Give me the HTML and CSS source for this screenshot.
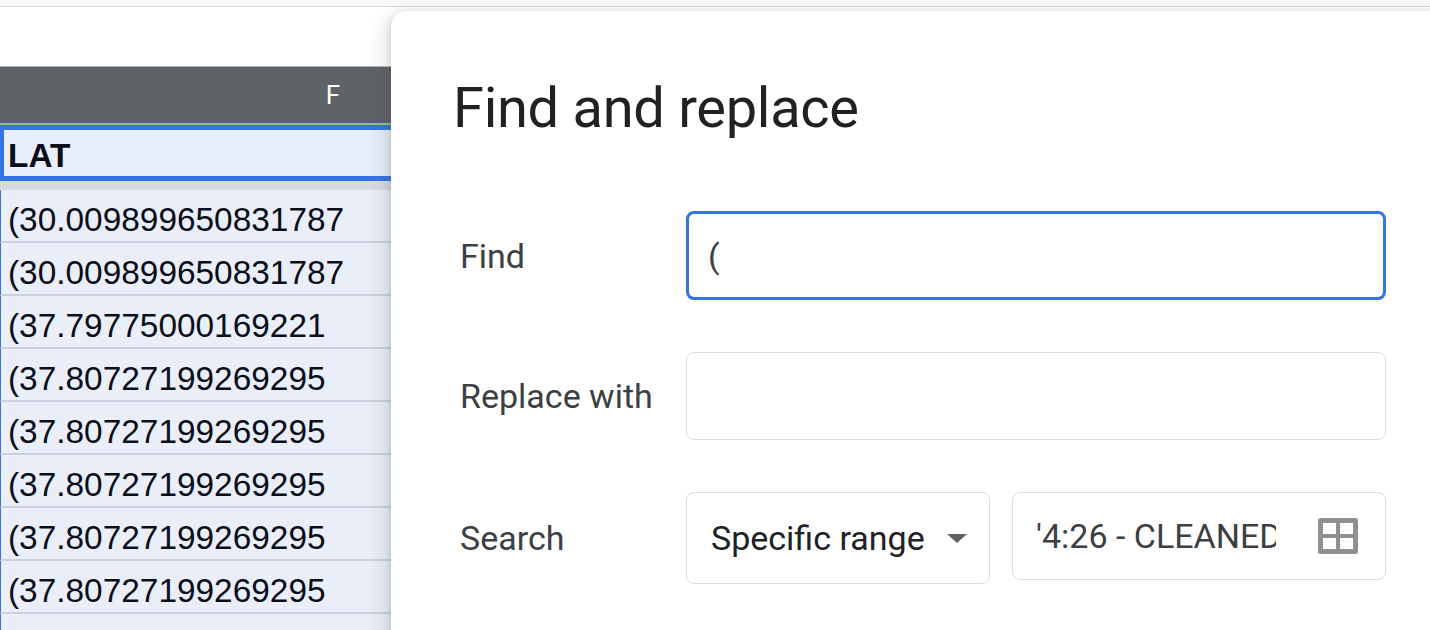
FILE: index.html
```html
<!DOCTYPE html>
<html lang="en">
<head>
<meta charset="utf-8">
<title>Find and replace</title>
<link rel="stylesheet" href="styles.css">
</head>
<body>
<div class="topbar"></div>
<div class="sheet">
  <div class="col-head">F</div>
  <div class="head-cell">LAT</div>
  <div class="freeze"></div>
  <div class="cell">(30.009899650831787</div>
  <div class="cell">(30.009899650831787</div>
  <div class="cell">(37.79775000169221</div>
  <div class="cell">(37.80727199269295</div>
  <div class="cell">(37.80727199269295</div>
  <div class="cell">(37.80727199269295</div>
  <div class="cell">(37.80727199269295</div>
  <div class="cell">(37.80727199269295</div>
  <div class="cell"></div>
</div>
<div class="dialog">
  <h1 class="title">Find and replace</h1>
  <div class="form">
    <div class="label">Find</div>
    <div class="field field-focus">(</div>
    <div class="label">Replace with</div>
    <div class="field"></div>
    <div class="label">Search</div>
    <div class="search-controls">
      <div class="select">
        <span class="select-text">Specific range</span>
        <span class="caret"></span>
      </div>
      <div class="range">
        <span class="range-text">'4:26 - CLEANED DATA'!F1:F</span>
        <svg class="range-icon" width="40" height="36" viewBox="0 0 40 36" aria-hidden="true">
          <rect x="0" y="0" width="40" height="36" rx="2.5" fill="#909094"/>
          <rect x="5" y="5" width="13" height="11" fill="#fff"/>
          <rect x="22" y="5" width="13" height="11" fill="#fff"/>
          <rect x="5" y="20" width="13" height="11" fill="#fff"/>
          <rect x="22" y="20" width="13" height="11" fill="#fff"/>
        </svg>
      </div>
    </div>
  </div>
</div>
</body>
</html>
```
FILE: styles.css
```css
html, body {
  margin: 0;
  padding: 0;
  width: 1430px;
  height: 630px;
  overflow: hidden;
  background: #ffffff;
  position: relative;
}

.topbar {
  height: 6px;
  background: #f8f9fa;
  border-bottom: 1px solid #d7d9dc;
}

.sheet {
  margin-top: 59px;
  width: 666px;
  font-family: "Liberation Sans", Arial, sans-serif;
}

.col-head {
  box-sizing: border-box;
  height: 59px;
  border-top: 1px solid #b3b5b8;
  border-bottom: 2px solid #93c47d;
  background: #5f6368;
  color: #ffffff;
  font-family: Roboto, "Liberation Sans", sans-serif;
  font-size: 26px;
  line-height: 56px;
  text-align: center;
}

.head-cell {
  box-sizing: border-box;
  height: 56px;
  border-top: 5px solid #3574e3;
  border-bottom: 5px solid #3574e3;
  border-left: 4px solid #3574e3;
  background: #e8eefa;
  color: #0b0f19;
  font-size: 33.4px;
  font-weight: bold;
  line-height: 38px;
  padding: 7px 0 0 4px;
}

.freeze {
  height: 9px;
  background: #d6dae3;
}

.cell {
  box-sizing: border-box;
  height: 53px;
  border-bottom: 2px solid #cbd1dc;
  border-left: 1px solid #3574e3;
  background: #e9eef9;
  color: #0b0f19;
  font-size: 33.4px;
  line-height: 38px;
  padding: 11px 0 0 7px;
  white-space: nowrap;
}

.dialog {
  position: absolute;
  left: 391px;
  top: 11px;
  width: 1120px;
  height: 700px;
  box-sizing: border-box;
  background: #ffffff;
  border-radius: 15px;
  box-shadow: 0 9px 19px 7px rgba(60, 64, 67, 0.13), 0 2px 7px rgba(60, 64, 67, 0.22);
  padding: 64px 0 0 62px;
  font-family: Roboto, "Liberation Sans", sans-serif;
}

.title {
  margin: 0;
  font-size: 56px;
  font-weight: 400;
  line-height: 66px;
  color: #202124;
  letter-spacing: -0.3px;
}

.form {
  margin-top: 70px;
  display: grid;
  grid-template-columns: 233px 700px;
  row-gap: 52px;
  align-items: center;
}

.label {
  padding-left: 7px;
  font-size: 34px;
  color: #3c4043;
  white-space: nowrap;
}

.field {
  box-sizing: border-box;
  height: 88px;
  border: 1.5px solid #dadce0;
  border-radius: 8px;
  display: flex;
  align-items: center;
  padding-left: 19px;
  font-size: 34px;
  color: #3c4043;
}

.field-focus {
  height: 89px;
  border: 3px solid #3574e3;
}

.search-controls {
  display: flex;
  align-items: flex-start;
  gap: 22px;
}

.select {
  box-sizing: border-box;
  width: 304px;
  height: 92px;
  border: 1.5px solid #dadce0;
  border-radius: 8px;
  display: flex;
  align-items: center;
  justify-content: space-between;
  padding: 0 22px 0 24px;
}

.select-text {
  font-size: 34px;
  color: #202124;
  white-space: nowrap;
}

.caret {
  width: 0;
  height: 0;
  border-left: 10px solid transparent;
  border-right: 10px solid transparent;
  border-top: 9px solid #5f6368;
}

.range {
  box-sizing: border-box;
  width: 374px;
  height: 88px;
  border: 1.5px solid #dadce0;
  border-radius: 8px;
  display: flex;
  align-items: center;
  padding: 0 27px 0 23px;
}

.range-text {
  width: 240px;
  overflow: hidden;
  white-space: nowrap;
  font-size: 34px;
  color: #3c4043;
}

.range-icon {
  margin-left: auto;
  display: block;
}
```
